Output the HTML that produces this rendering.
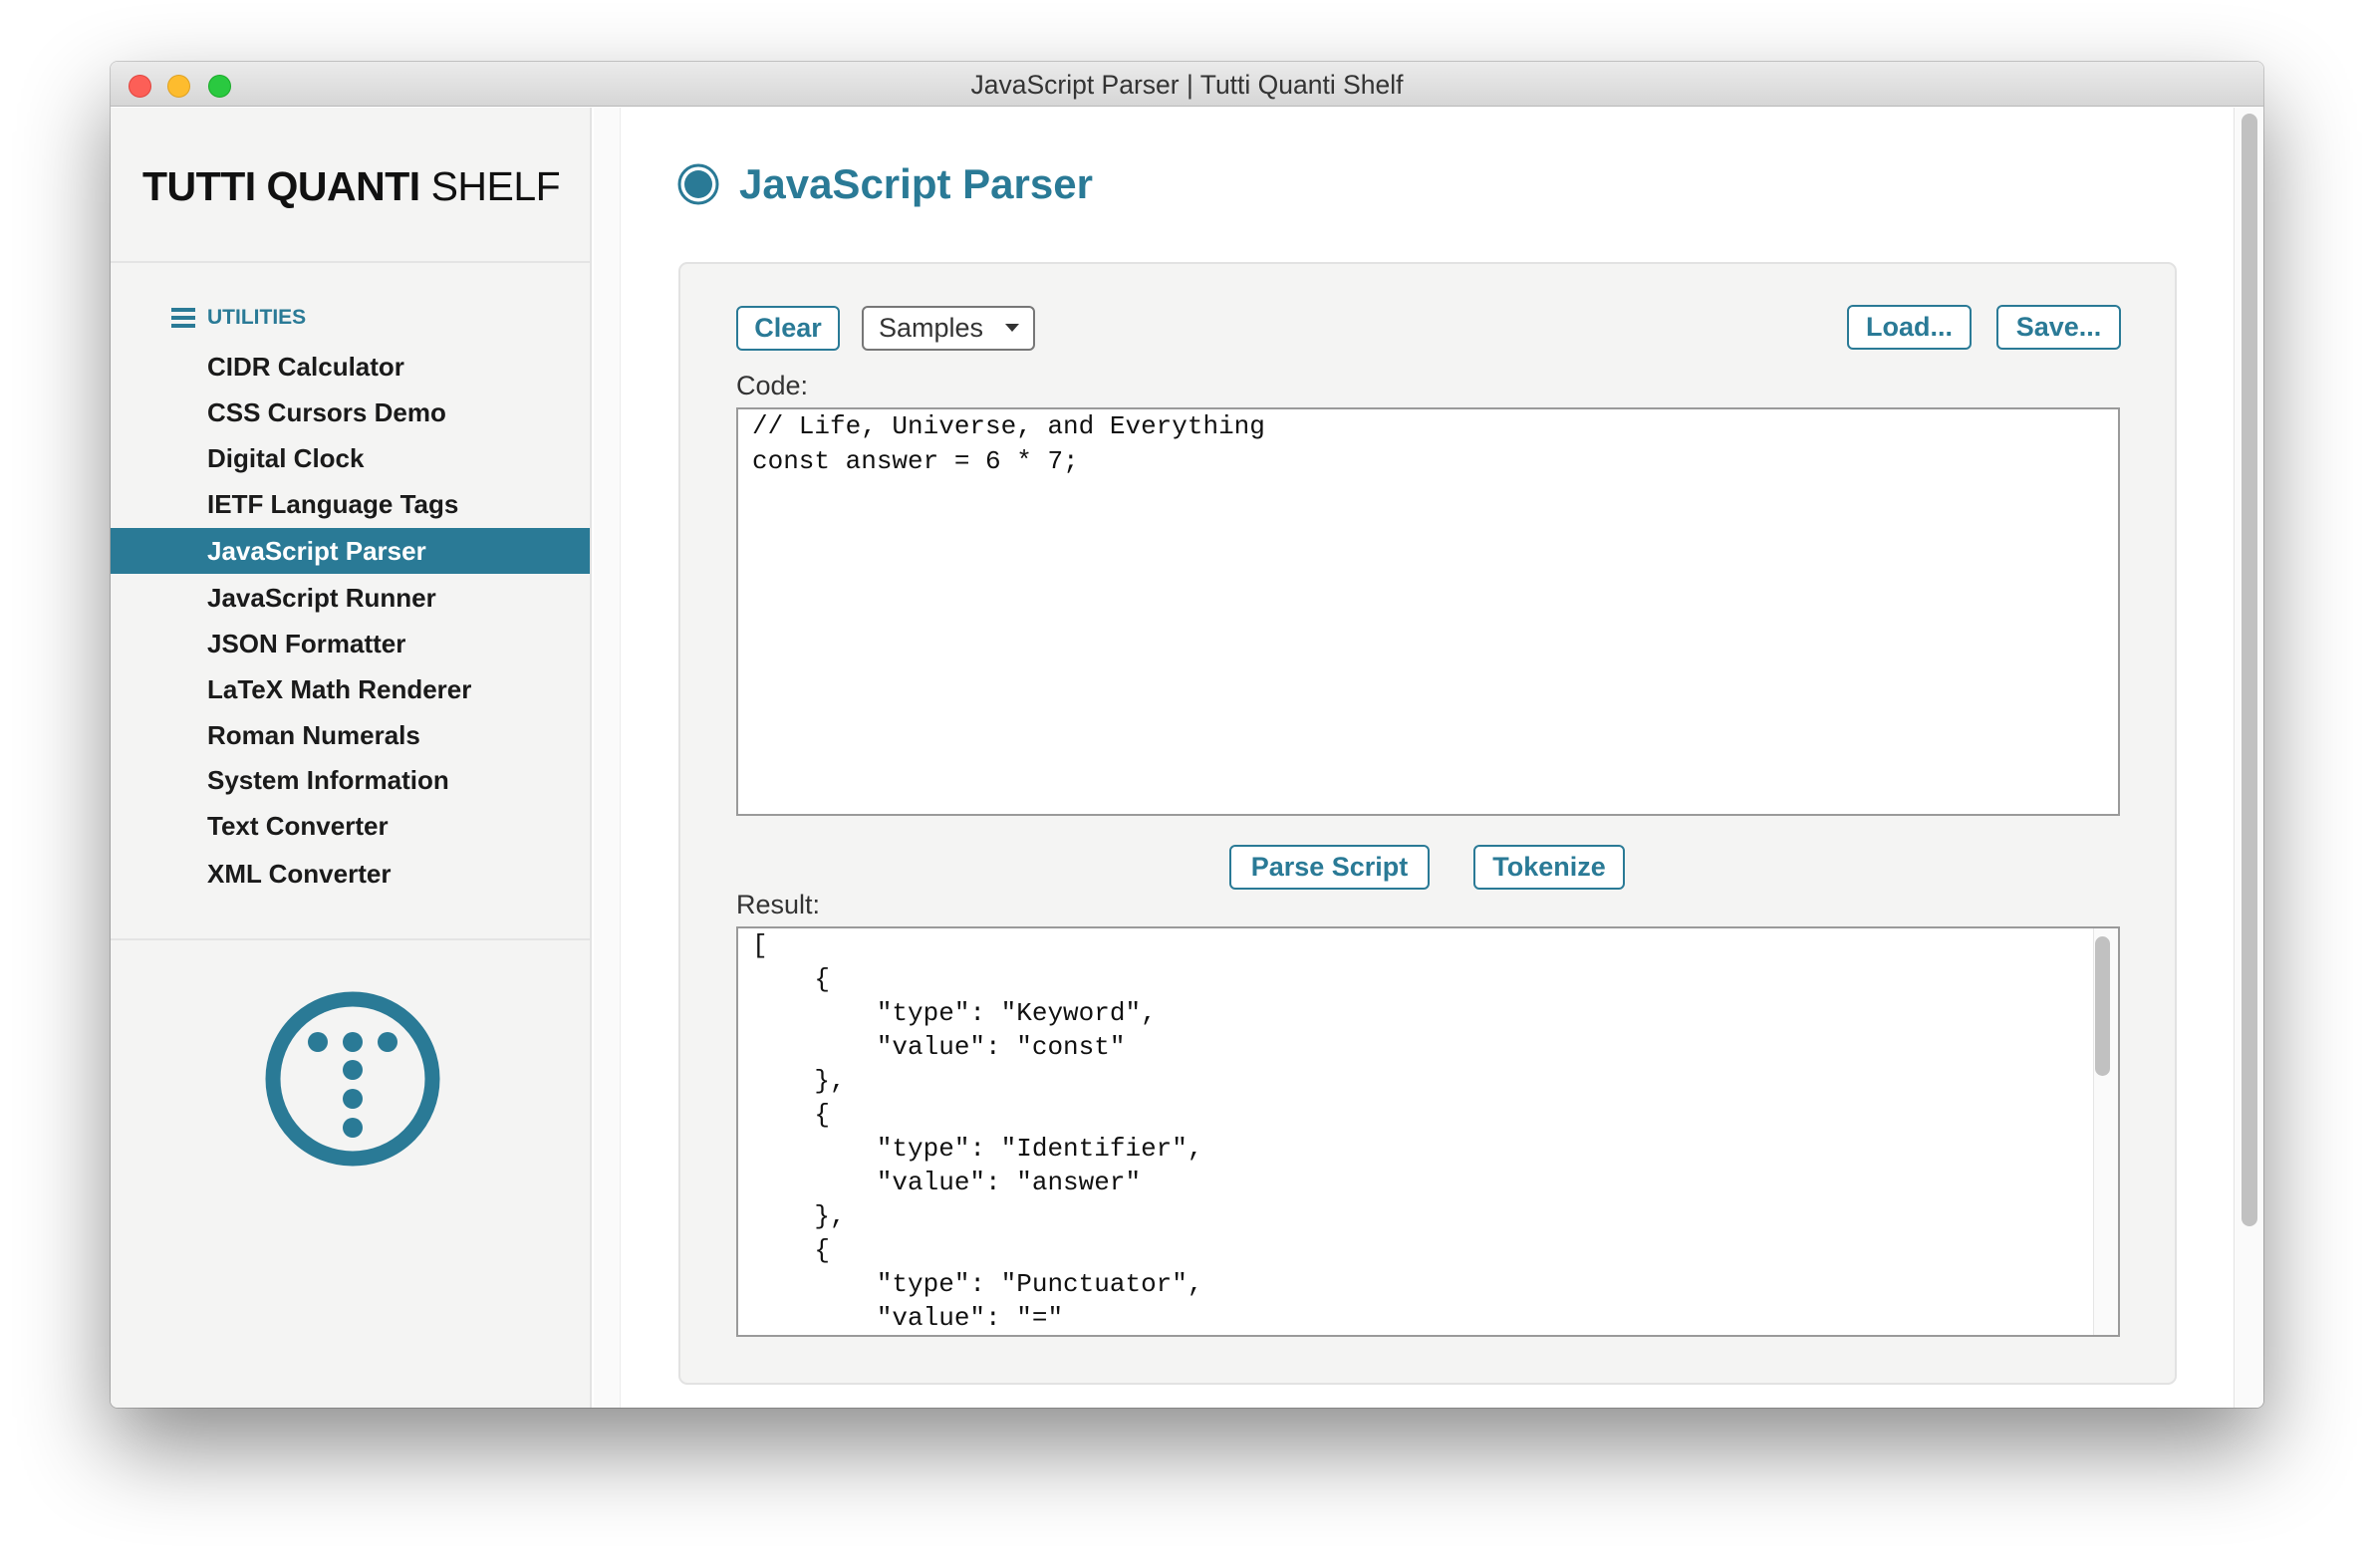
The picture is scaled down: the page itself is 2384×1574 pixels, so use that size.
<!DOCTYPE html>
<html><head><meta charset="utf-8"><style>
*{box-sizing:border-box;margin:0;padding:0}
body{width:2384px;height:1574px;background:#fff;position:relative;overflow:hidden;font-family:"Liberation Sans",sans-serif}
.win{position:absolute;left:111px;top:62px;width:2161px;height:1351px;border-radius:7px;background:#fff;box-shadow:0 40px 90px rgba(0,0,0,.45),0 0 0 1px rgba(0,0,0,.18);overflow:hidden}
.tb{position:absolute;left:0;top:0;width:100%;height:45px;background:linear-gradient(#ebebeb,#d6d6d6);border-bottom:1px solid #b9b9b9;text-align:center;font-size:26.5px;line-height:47px;color:#333}
.tl{position:absolute;top:13px;width:23px;height:23px;border-radius:50%}
.side{position:absolute;left:0;top:46px;width:483px;height:1305px;background:#f4f4f3;border-right:2px solid #e3e3e3}
.gut{position:absolute;left:485px;top:46px;width:27px;height:1305px;background:#fafafa;border-right:1px solid #ececec}
.logo{position:absolute;left:32px;top:54px;font-size:41px;color:#111;letter-spacing:-0.5px;line-height:50px;white-space:nowrap}
.hr{position:absolute;left:0;width:481px;height:2px;background:#e4e4e4}
.util{position:absolute;font-size:21px;color:#2a7a96;font-weight:bold;line-height:28px}
.item{position:absolute;left:0;width:481px;height:46px;line-height:46px;padding-left:97px;font-size:26px;font-weight:bold;color:#1a1a1a;white-space:nowrap}
.sel{background:#2a7a96;color:#fff}
.h1{position:absolute;left:631px;top:96px;font-size:42px;font-weight:bold;color:#2a7a96;line-height:54px;white-space:nowrap}
.panel{position:absolute;left:570px;top:201px;width:1504px;height:1127px;background:#f4f4f3;border:2px solid #e2e2e2;border-radius:9px}
.btn{position:absolute;height:45px;border:2px solid #2a7a96;border-radius:6px;background:#fff;color:#2a7a96;font-weight:bold;font-size:27px;text-align:center;line-height:40px;white-space:nowrap}
.lbl{position:absolute;font-size:27px;color:#333}
.ta{position:absolute;background:#fff;border:2px solid #9a9a9a;font-family:"Liberation Mono",monospace;font-size:26px;color:#111;white-space:pre}
</style></head><body>
<div class="win">
 <div class="tb">JavaScript Parser | Tutti Quanti Shelf
  <div class="tl" style="left:18px;background:#fc5f57;border:1px solid #e0443e"></div>
  <div class="tl" style="left:57px;background:#fdbc2e;border:1px solid #dea123"></div>
  <div class="tl" style="left:98px;background:#2ac940;border:1px solid #1aab29"></div>
 </div>
 <div class="side">
  <div class="logo"><b>TUTTI QUANTI</b> SHELF</div>
  <div class="hr" style="top:154px"></div>
  <svg style="position:absolute;left:61px;top:200px" width="24" height="22"><rect y="1" width="24" height="4" fill="#2a7a96"/><rect y="9" width="24" height="4" fill="#2a7a96"/><rect y="17" width="24" height="4" fill="#2a7a96"/></svg>
  <div class="util" style="left:97px;top:197px">UTILITIES</div>
  <div class="item" style="top:237px">CIDR Calculator</div>
  <div class="item" style="top:283px">CSS Cursors Demo</div>
  <div class="item" style="top:329px">Digital Clock</div>
  <div class="item" style="top:375px">IETF Language Tags</div>
  <div class="item sel" style="top:422px">JavaScript Parser</div>
  <div class="item" style="top:469px">JavaScript Runner</div>
  <div class="item" style="top:515px">JSON Formatter</div>
  <div class="item" style="top:561px">LaTeX Math Renderer</div>
  <div class="item" style="top:607px">Roman Numerals</div>
  <div class="item" style="top:652px">System Information</div>
  <div class="item" style="top:698px">Text Converter</div>
  <div class="item" style="top:746px">XML Converter</div>
  <div class="hr" style="top:834px"></div>
  <svg style="position:absolute;left:153px;top:885px" width="180" height="180">
   <circle cx="90" cy="90" r="80" fill="none" stroke="#2a7a96" stroke-width="15"/>
   <g fill="#2a7a96"><circle cx="55" cy="53" r="10"/><circle cx="90" cy="53" r="10"/><circle cx="125" cy="53" r="10"/><circle cx="90" cy="81" r="10"/><circle cx="90" cy="110" r="10"/><circle cx="90" cy="139" r="10"/></g>
  </svg>
 </div>
 <div class="gut"></div>
 <svg style="position:absolute;left:568px;top:101px" width="44" height="44"><circle cx="22" cy="22" r="19" fill="none" stroke="#2a7a96" stroke-width="3"/><circle cx="22" cy="22" r="14" fill="#2a7a96"/></svg>
 <div class="h1">JavaScript Parser</div>
 <div class="panel"></div>
 <div class="btn" style="left:628px;top:245px;width:104px">Clear</div>
 <div class="btn" style="left:754px;top:245px;width:174px;border-color:#777;color:#333;font-weight:normal;text-align:left;padding-left:15px">Samples <span style="position:absolute;right:14px;top:16px;width:0;height:0;border-left:7px solid transparent;border-right:7px solid transparent;border-top:8px solid #333"></span></div>
 <div class="btn" style="left:1743px;top:244px;width:125px">Load...</div>
 <div class="btn" style="left:1893px;top:244px;width:125px">Save...</div>
 <div class="lbl" style="left:628px;top:310px">Code:</div>
 <div class="ta" style="left:628px;top:347px;width:1389px;height:410px;padding:0 14px;line-height:35px">// Life, Universe, and Everything
const answer = 6 * 7;</div>
 <div class="btn" style="left:1123px;top:786px;width:201px">Parse Script</div>
 <div class="btn" style="left:1368px;top:786px;width:152px">Tokenize</div>
 <div class="lbl" style="left:628px;top:831px">Result:</div>
 <div class="ta" style="left:628px;top:868px;width:1389px;height:412px;padding:0 14px;line-height:34px;overflow:hidden">[
    {
        "type": "Keyword",
        "value": "const"
    },
    {
        "type": "Identifier",
        "value": "answer"
    },
    {
        "type": "Punctuator",
        "value": "="
    },</div>
 <div style="position:absolute;left:1990px;top:870px;width:25px;height:408px;background:#fafafa;border-left:1px solid #e6e6e6"></div>
 <div style="position:absolute;left:1992px;top:878px;width:15px;height:140px;border-radius:8px;background:#c1c1c1"></div>
 <div style="position:absolute;left:2131px;top:46px;width:30px;height:1305px;background:#fafafa;border-left:1px solid #e3e3e3"></div>
 <div style="position:absolute;left:2139px;top:52px;width:16px;height:1117px;border-radius:8px;background:#c1c1c1"></div>
</div>
</body></html>
